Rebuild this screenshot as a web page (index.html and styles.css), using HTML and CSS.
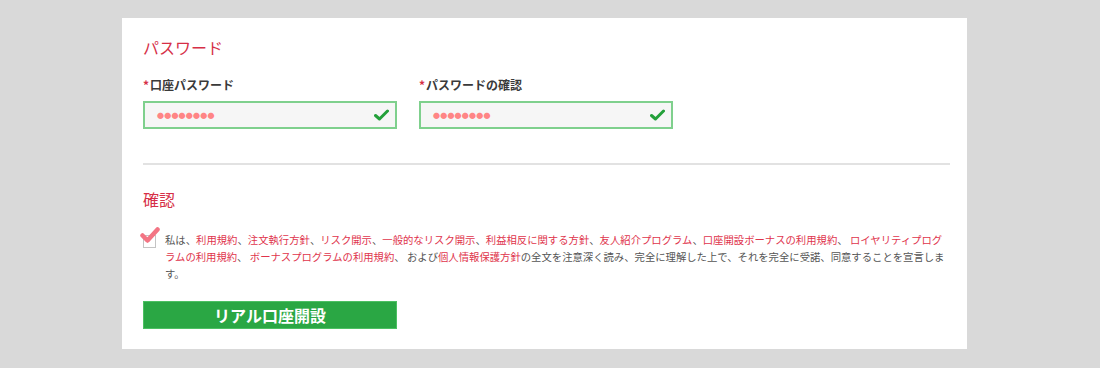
FILE: index.html
```html
<!DOCTYPE html>
<html lang="ja">
<head>
    <meta charset="UTF-8">
    <meta name="viewport" content="width=device-width, initial-scale=1.0">
    <title>リアル口座開設</title>
    <link rel="stylesheet" href="styles.css">
</head>
<body>
    <div class="card">
        <h2 class="section-title">パスワード</h2>
        <div class="fields">
            <div class="field">
                <label class="label"><span class="req">*</span>口座パスワード</label>
                <div class="input-box">
                    <span class="dots">●●●●●●●●</span>
                    <svg class="ok" width="15" height="12" viewBox="0 0 15 12"><path d="M1.5 6.5 L5.5 10 L13.5 2" fill="none" stroke="#23a03a" stroke-width="3" stroke-linecap="round" stroke-linejoin="round"/></svg>
                </div>
            </div>
            <div class="field">
                <label class="label"><span class="req">*</span>パスワードの確認</label>
                <div class="input-box">
                    <span class="dots">●●●●●●●●</span>
                    <svg class="ok" width="15" height="12" viewBox="0 0 15 12"><path d="M1.5 6.5 L5.5 10 L13.5 2" fill="none" stroke="#23a03a" stroke-width="3" stroke-linecap="round" stroke-linejoin="round"/></svg>
                </div>
            </div>
        </div>

        <hr class="divider">

        <h2 class="section-title confirm-title">確認</h2>
        <div class="agree">
            <svg class="checkbox" width="22" height="24" viewBox="0 0 22 24">
                <rect x="3.5" y="9.5" width="12" height="12" fill="#fff" stroke="#c4c4c4"/>
                <path d="M2.5 9.5 L7.5 14.5 L17.5 3.5" fill="none" stroke="#f37584" stroke-width="4.5" stroke-linecap="round" stroke-linejoin="round"/>
            </svg>
            <p class="agree-text">私は、<a>利用規約</a>、<a>注文執行方針</a>、<a>リスク開示</a>、<a>一般的なリスク開示</a>、<a>利益相反に関する方針</a>、<a>友人紹介プログラム</a>、<a>口座開設ボーナスの利用規約</a>、 <a>ロイヤリティプログラムの利用規約</a>、 <a>ボーナスプログラムの利用規約</a>、 および<a>個人情報保護方針</a>の全文を注意深く読み、完全に理解した上で、それを完全に受諾、同意することを宣言します。</p>
        </div>

        <button class="submit">リアル口座開設</button>
    </div>
</body>
</html>
```

FILE: styles.css
```css
* {
    margin: 0;
    padding: 0;
    box-sizing: border-box;
    font-family: "Noto Sans CJK JP", "Noto Sans", sans-serif;
}

body {
    background: #d9d9d9;
    width: 1100px;
    height: 368px;
    padding-top: 18px;
}

.card {
    width: 845px;
    margin-left: 122px;
    background: #ffffff;
    padding: 18px 17px 20px 21px;
}

.section-title {
    font-size: 16px;
    line-height: 22px;
    font-weight: normal;
    color: #d62f47;
}

.fields {
    display: flex;
    gap: 22px;
    margin-top: 19px;
}

.field {
    width: 254px;
}

.label {
    display: block;
    font-size: 12px;
    line-height: 16px;
    font-weight: bold;
    color: #3a3a3a;
    margin-bottom: 8px;
}

.req {
    color: #d62f47;
    margin-right: 1px;
}

.input-box {
    height: 28px;
    border: 2px solid #7fd08d;
    background: #f6f6f6;
    display: flex;
    align-items: center;
    justify-content: space-between;
    padding: 0 6px 0 12px;
}

.dots {
    color: #ff8585;
    font-size: 7px;
    letter-spacing: 0.2px;
    line-height: 1;
}

.ok {
    display: block;
}

.divider {
    border: none;
    border-top: 2px solid #e2e2e2;
    margin-top: 34px;
}

.confirm-title {
    margin-top: 23px;
}

.agree {
    display: flex;
    margin-top: 21px;
}

.checkbox {
    flex: none;
    width: 22px;
    height: 24px;
    margin-left: -3px;
    margin-right: 3px;
    margin-top: -5px;
}

.agree-text {
    width: 785px;
    font-size: 10.35px;
    line-height: 17px;
    color: #555555;
}

.agree-text a {
    color: #e0344c;
}

.submit {
    display: block;
    margin-top: 19px;
    width: 254px;
    height: 28px;
    border: 1px solid #4cc063;
    background: #2aa744;
    color: #ffffff;
    font-size: 16px;
    font-weight: bold;
    cursor: pointer;
}
```
